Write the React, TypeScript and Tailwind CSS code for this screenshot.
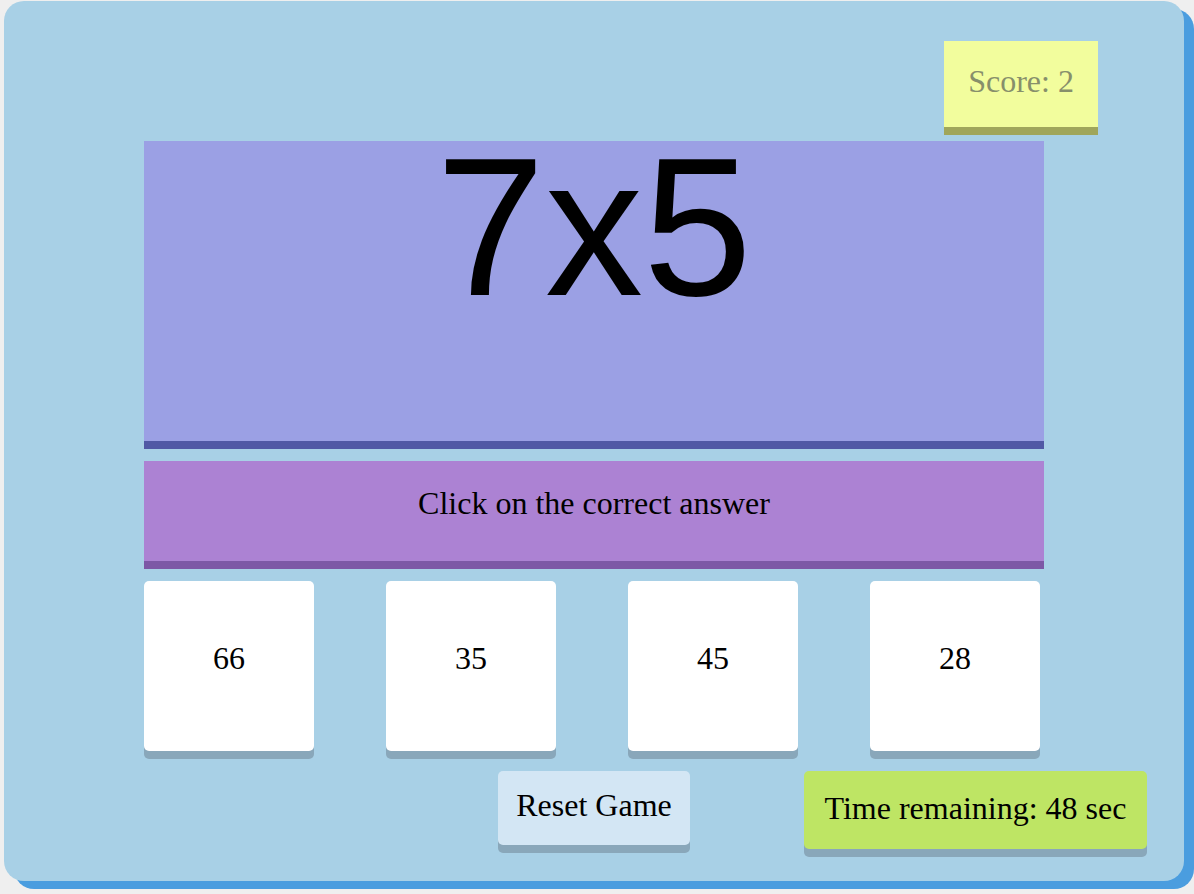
const answers = [66, 35, 45, 28];

const serif = "font-['Liberation_Serif','Times_New_Roman',serif]";

export default function App() {
  return (
    <div className="min-h-[894px] w-full bg-[#efefef] pl-[4px] pt-[1px]">
      <div className="flex h-[880px] w-[1180px] flex-col items-center rounded-[20px] bg-[#a8d0e6] shadow-[10px_8px_0_#4a9ddf]">
        {/* score */}
        <div className="flex w-full justify-end pr-[86px] pt-[40px]">
          <div
            className={`flex h-[86px] w-[154px] items-center justify-center bg-[#f2fd9d] pb-[6px] text-[32px] text-[#878f6b] shadow-[0_8px_0_#a0a65b] ${serif}`}
          >
            Score: 2
          </div>
        </div>

        {/* question */}
        <div className="mt-[14px] h-[308px] w-[900px] border-b-8 border-[#5159a5] bg-[#9ba0e4] text-center font-['Liberation_Sans',Arial,sans-serif] text-[196px] leading-[174px] text-black">
          7x5
        </div>

        {/* instruction */}
        <div
          className={`mt-[12px] flex h-[108px] w-[900px] items-center justify-center border-b-8 border-[#7d58a6] bg-[#ac82d3] pb-[16px] text-[32px] text-black ${serif}`}
        >
          Click on the correct answer
        </div>

        {/* answer cards */}
        <div className="mt-[12px] flex w-[900px] gap-[72px]">
          {answers.map((a) => (
            <div
              key={a}
              className={`h-[170px] w-[170px] cursor-pointer rounded-[5px] bg-white pt-[59px] text-center text-[32px] leading-[36px] text-black shadow-[0_8px_0_#89a7ba] ${serif}`}
            >
              {a}
            </div>
          ))}
        </div>

        {/* bottom row */}
        <div className="mt-[20px] grid w-full grid-cols-[1fr_auto_1fr] items-start">
          <div />
          <button
            className={`h-[74px] w-[192px] rounded-[5px] bg-[#d3e6f4] pb-[6px] text-[32px] text-black shadow-[0_8px_0_#89a7ba] ${serif}`}
          >
            Reset Game
          </button>
          <div className="flex justify-end pr-[37px]">
            <div
              className={`flex h-[78px] w-[343px] items-center justify-center rounded-[5px] bg-[#bee564] pb-[4px] text-[32px] text-black shadow-[0_8px_0_#89a7ba] ${serif}`}
            >
              Time remaining: 48 sec
            </div>
          </div>
        </div>
      </div>
    </div>
  );
}
